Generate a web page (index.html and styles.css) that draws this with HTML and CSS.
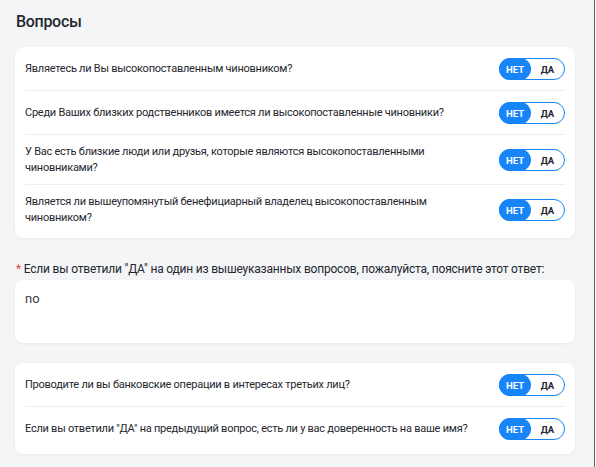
FILE: index.html
```html
<!DOCTYPE html>
<html lang="ru">
<head>
    <meta charset="UTF-8">
    <meta name="viewport" content="width=device-width, initial-scale=1.0">
    <title>Вопросы</title>
    <link rel="stylesheet" href="styles.css">
</head>
<body>

    <div class="page">
        <h2 class="page-title">Вопросы</h2>

        <div class="card">
            <div class="question">
                <p>Являетесь ли Вы высокопоставленным чиновником?</p>
                <div class="switch"><span class="on">НЕТ</span><span>ДА</span></div>
            </div>
            <div class="question">
                <p>Среди Ваших близких родственников имеется ли высокопоставленные чиновники?</p>
                <div class="switch"><span class="on">НЕТ</span><span>ДА</span></div>
            </div>
            <div class="question">
                <p>У Вас есть близкие люди или друзья, которые являются высокопоставленными чиновниками?</p>
                <div class="switch"><span class="on">НЕТ</span><span>ДА</span></div>
            </div>
            <div class="question">
                <p>Является ли вышеупомянутый бенефициарный владелец высокопоставленным чиновником?</p>
                <div class="switch"><span class="on">НЕТ</span><span>ДА</span></div>
            </div>
        </div>

        <label class="field-label" for="explain"><span class="required">*</span> Если вы ответили "ДА" на один из вышеуказанных вопросов, пожалуйста, поясните этот ответ:</label>
        <textarea class="field" id="explain">no</textarea>

        <div class="card">
            <div class="question">
                <p>Проводите ли вы банковские операции в интересах третьих лиц?</p>
                <div class="switch"><span class="on">НЕТ</span><span>ДА</span></div>
            </div>
            <div class="question">
                <p>Если вы ответили "ДА" на предыдущий вопрос, есть ли у вас доверенность на ваше имя?</p>
                <div class="switch"><span class="on">НЕТ</span><span>ДА</span></div>
            </div>
        </div>
    </div>

</body>
</html>
```

FILE: styles.css
```css
:root {
    --blue: #1785f8;
    --text: #25272e;
    --line: #eceef1;
}

body {
    margin: 0;
    background-color: #fff;
    font-family: Roboto, "Noto Sans", sans-serif;
    color: var(--text);
}

.page {
    box-sizing: border-box;
    width: 595px;
    height: 467px;
    padding: 12px 19px 0 15px;
    background-color: #f4f5f7;
    border-right: 1px solid #5b5e63;
    overflow: hidden;
}

.page-title {
    margin: 0 0 15px 1px;
    font-size: 16px;
    line-height: 20px;
    font-weight: 500;
    letter-spacing: -0.3px;
}

.card {
    background-color: #fff;
    border-radius: 8px;
    padding: 0 10px 4px;
    box-shadow: 0 1px 3px rgba(0, 0, 0, 0.06);
}

.question {
    display: flex;
    align-items: center;
    gap: 8px;
    min-height: 26px;
    padding: 9px 0 8px;
    border-bottom: 1px solid var(--line);
}

.question:last-child {
    border-bottom: 0;
}

.question p {
    margin: 0;
    flex: 1;
    max-width: 462px;
    font-size: 11px;
    letter-spacing: -0.25px;
    line-height: 16px;
}

.switch {
    margin-left: auto;
    flex: 0 0 66px;
    display: flex;
    height: 22px;
    box-sizing: border-box;
    border: 1px solid var(--blue);
    border-radius: 11px;
    font-size: 9.5px;
    font-weight: 700;
}

.switch span {
    flex: 1;
    display: flex;
    align-items: center;
    justify-content: center;
}

.switch span.on {
    flex: 0 0 32px;
    margin: -1px 0 -1px -1px;
    border-radius: 11px;
    background-color: var(--blue);
    color: #fff;
}

.field-label {
    display: block;
    margin: 23px 0 3px 1px;
    font-size: 12px;
    letter-spacing: -0.2px;
    line-height: 16px;
}

.required {
    color: #e5484d;
}

.field {
    display: block;
    box-sizing: border-box;
    width: 100%;
    height: 63px;
    margin: 0 0 20px;
    padding: 11px 10px;
    border: 0;
    border-radius: 8px;
    background-color: #fff;
    box-shadow: 0 1px 3px rgba(0, 0, 0, 0.06);
    font-family: inherit;
    font-size: 13px;
    color: #3a3c42;
    resize: none;
}
```
